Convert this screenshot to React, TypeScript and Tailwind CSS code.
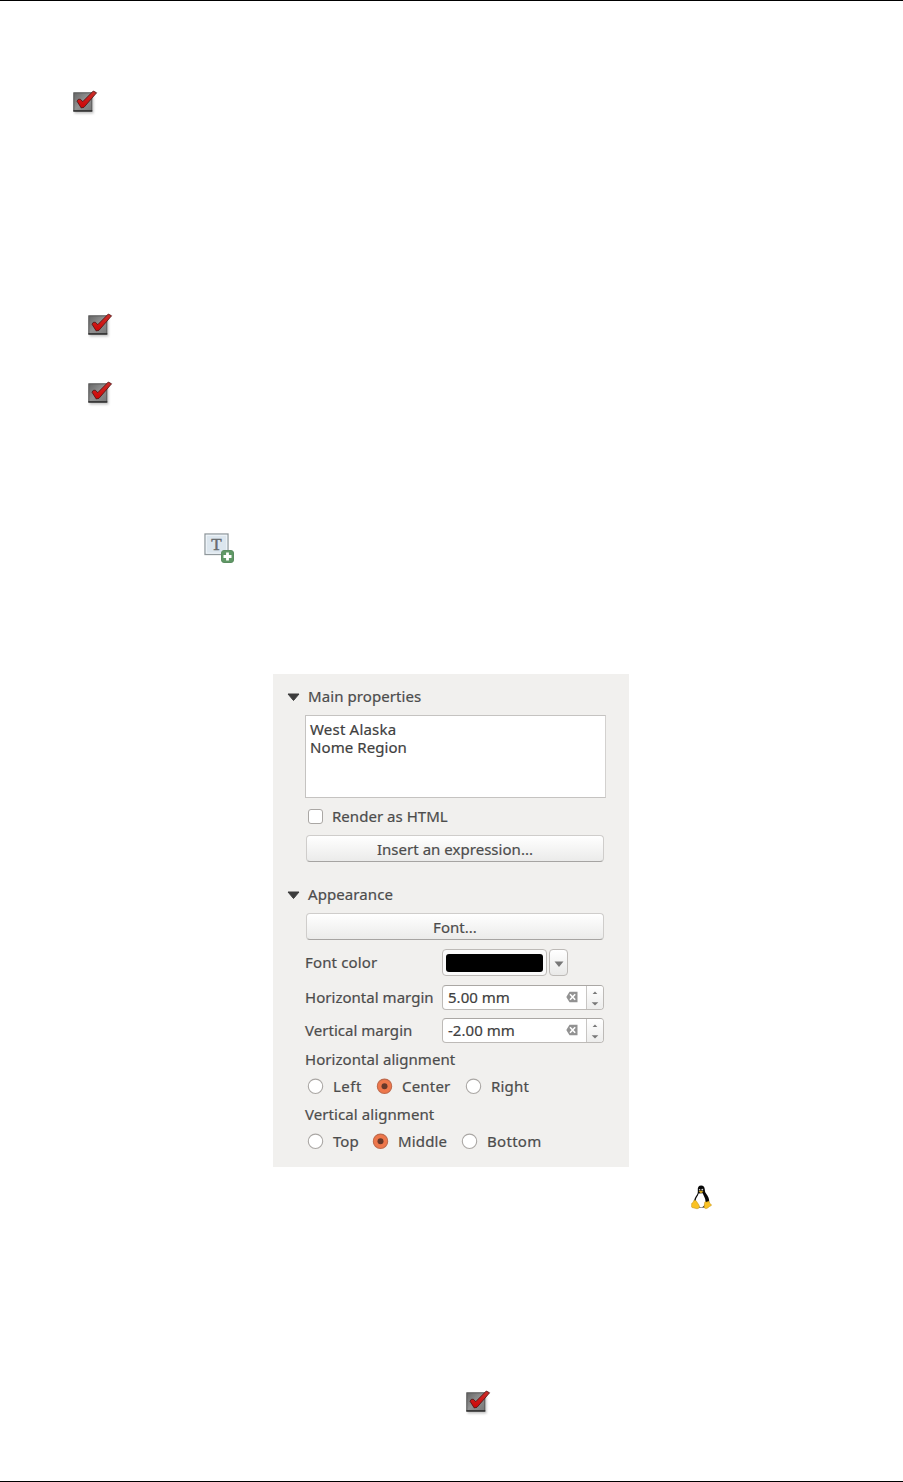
import React from "react";

const CheckIcon: React.FC = () => (
  <svg className="block shrink-0" width="26" height="26" viewBox="0 0 26 26">
    <defs>
      <linearGradient id="tile" x1="0" y1="0" x2="1" y2="1">
        <stop offset="0" stopColor="#666" />
        <stop offset="0.5" stopColor="#929292" />
        <stop offset="1" stopColor="#777" />
      </linearGradient>
      <linearGradient id="tick" x1="0" y1="0" x2="0" y2="1">
        <stop offset="0" stopColor="#c9302c" />
        <stop offset="1" stopColor="#d00505" />
      </linearGradient>
      <filter id="soft" x="-20%" y="-20%" width="150%" height="150%">
        <feGaussianBlur stdDeviation="0.8" />
      </filter>
    </defs>
    <rect x="1.5" y="4.5" width="19" height="19" fill="#aaa" opacity="0.7" filter="url(#soft)" />
    <rect x="0.8" y="2.8" width="18" height="18" fill="url(#tile)" stroke="#555" />
    <path d="M0.3 21H19.3" stroke="#222" strokeWidth="1.3" />
    <path
      d="M4 11.2 5.2 9.4 7.2 9.2 9.8 11.6 20.3 1 23.6 2.8 11 17.3 8.2 17.9Z"
      fill="url(#tick)"
      stroke="#4a1212"
      strokeWidth="0.8"
      strokeLinejoin="round"
    />
  </svg>
);

const AddLabelIcon: React.FC = () => (
  <svg className="block shrink-0" width="31" height="31" viewBox="0 0 31 31">
    <rect x="1" y="2" width="23" height="20.5" fill="#dce6ee" stroke="#90989c" strokeWidth="1.3" />
    <rect x="2.3" y="3.3" width="20.4" height="17.9" fill="none" stroke="#f0f5f9" />
    <text
      x="12.5"
      y="17.5"
      textAnchor="middle"
      fontFamily="'Liberation Serif', serif"
      fontSize="17"
      fill="#686c6e"
      stroke="#686c6e"
      strokeWidth="0.5"
    >
      T
    </text>
    <rect x="17.5" y="18.5" width="12" height="12" rx="2.5" fill="#5f9865" stroke="#5a8c60" />
    <path d="M23.5 20.5V28.5M19.5 24.5H27.5" stroke="#fff" strokeWidth="2.8" />
  </svg>
);

const TuxIcon: React.FC = () => (
  <svg className="block shrink-0" width="21" height="25" viewBox="0 0 21 25">
    <path
      d="M10.2 0.6C7.6 0.6 6.6 2.6 6.8 5.2 7 8 6.6 9 4.9 11.3 3.4 13.5 2.8 16 3.2 18.3L8 22.6H14.5L18.2 17.6C18.5 14.2 17.2 11.4 15.2 8.8 14 7.2 14 6.4 13.8 4.4 13.6 2 12.4 0.6 10.2 0.6Z"
      fill="#080808"
    />
    <path
      d="M7.6 8.4 11.7 8.2C12.4 10.7 14.6 12.7 14.5 16.2 14.4 19.8 12.8 22.2 10 22.2 7.2 22.2 4.6 18.7 4.6 15.8 4.7 12.8 7 11.2 7.6 8.4Z"
      fill="#fff"
    />
    <circle cx="8.6" cy="4.7" r="0.8" fill="#ddd" />
    <circle cx="11.3" cy="4.6" r="0.9" fill="#ddd" />
    <path d="M7.6 6.6 10 5.6 12.5 6.7 9.9 8.2Z" fill="#d9ab22" />
    <path
      d="M2.9 15.3 5 15.6 8 20.1C9.1 22.2 7.9 24 5.9 23.7L1 22.5C0 22 0.8 20.4 0.6 19.2 0.5 18 1.7 17.8 2.2 17.1Z"
      fill="#fac224"
      stroke="#bd911f"
      strokeWidth="0.5"
    />
    <path
      d="M13.7 17.2C14 16.2 15.1 17 15.9 17 16.7 17 17.4 15.7 18.2 16.7L18.7 18.3 20.5 19.8C20.8 20.9 18.5 21.1 17 22.7 15.2 24.3 13 23.7 13.1 21.6Z"
      fill="#fac224"
      stroke="#bd911f"
      strokeWidth="0.5"
    />
  </svg>
);

const Triangle: React.FC = () => (
  <svg className="mt-1 mr-2 block shrink-0" width="13" height="9" viewBox="0 0 13 9">
    <path d="M1 1H12L6.5 7.5Z" fill="#3c3c3c" stroke="#3c3c3c" strokeLinejoin="round" />
  </svg>
);

const PushButton: React.FC<{ children: React.ReactNode }> = ({ children }) => (
  <button className="ml-px flex h-[27px] w-[298px] items-center justify-center rounded-[4px] border border-[#cfcdcb] border-b-[#a6a4a2] bg-linear-to-b from-white to-[#ebebea] text-[#4c4c4c]">
    {children}
  </button>
);

const SpinBox: React.FC<{ label: React.ReactNode; children: React.ReactNode }> = ({
  label,
  children,
}) => (
  <div className="flex h-[25px] items-center">
    <span className="w-[137px] shrink-0 pb-px">{label}</span>
    <div className="flex h-[25px] w-[162px] overflow-hidden rounded-[4px] border border-[#bdbab7] border-t-[#aaa7a4] bg-white">
      <span className="flex flex-1 items-center pb-px pl-[5px] text-[#404040]">{children}</span>
      <svg className="mt-[5px] mr-[8px] block" width="12" height="12" viewBox="0 0 12 12">
        <path d="M0.3 6 3.5 0.7H11.5V11.3H3.5Z" fill="#929292" />
        <path d="M4 3.3 9.2 8.7M9.2 3.3 4 8.7" stroke="#fff" strokeWidth="1.6" />
      </svg>
      <svg
        className="block border-l border-[#c8c6c4] bg-linear-to-b from-white to-[#ededec]"
        width="17"
        height="23"
        viewBox="0 0 17 23"
      >
        <path d="M6 7.7H11L8.5 5.2Z" fill="#777" />
        <path d="M5 16.5H12L8.5 20Z" fill="#777" />
      </svg>
    </div>
  </div>
);

const Radio: React.FC<{ checked?: boolean }> = ({ checked }) => (
  <svg className="block shrink-0" width="17" height="17" viewBox="0 0 17 17">
    <circle
      cx="8.5"
      cy="8.3"
      r="7.2"
      fill={checked ? "#ee774b" : "#fff"}
      stroke={checked ? "#bf6a4c" : "#aaa7a4"}
      strokeWidth="1.1"
    />
    {checked && <circle cx="8.5" cy="8.3" r="3" fill="#67382a" />}
  </svg>
);

const LabelPanel: React.FC = () => (
  <section className="ml-[273px] h-[493px] w-[356px] bg-[#f1f0ee] pl-8 font-['Noto_Sans',sans-serif] text-[15px] leading-[18px] tracking-[0.03px] whitespace-nowrap text-[#4c4c4c] [-webkit-text-stroke:0.2px]">
    <h2 className="-ml-[18px] flex h-[41px] items-center pt-0.5">
      <Triangle />
      <span className="tracking-[0.08px]">Main properties</span>
    </h2>
    <div className="h-[83px] w-[301px] border border-[#c5c3c1] border-r-[#d3d1cf] bg-white pt-1 pl-1 text-[#404040]">
      <p className="tracking-[0.2px]">West Alaska</p>
      <p className="tracking-[0.08px]">Nome Region</p>
    </div>
    <div className="flex h-[37px] items-center pl-[3px]">
      <span className="mr-[9px] size-[15px] rounded-[3px] border border-[#aaa7a4] bg-white" />
      <span className="pb-0.5">Render as HTML</span>
    </div>
    <PushButton>
      <span>Insert an expression...</span>
    </PushButton>
    <h2 className="-ml-[18px] flex h-[51px] items-center pt-3">
      <Triangle />
      <span className="tracking-[0.08px]">Appearance</span>
    </h2>
    <PushButton>
      <span>Font...</span>
    </PushButton>
    <div className="my-[9px] flex h-[27px] items-center">
      <span className="w-[137px] pb-0.5 tracking-[0.15px]">Font color</span>
      <div className="h-[27px] w-[105px] rounded-[4px] border border-[#bdbab7] bg-[#fafafa] p-[3px] pt-1">
        <div className="h-[18px] rounded-[3px] bg-black" />
      </div>
      <div className="ml-0.5 flex h-[27px] w-[19px] items-center justify-center rounded-[4px] border border-[#bdbab7] bg-linear-to-b from-white to-[#e9e9e8]">
        <svg className="mt-[3px]" width="10" height="7" viewBox="0 0 10 7">
          <path d="M0.5 0.5H9.5L5 6Z" fill="#777" />
        </svg>
      </div>
    </div>
    <SpinBox label={<span>Horizontal margin</span>}>
      <span>5.00 mm</span>
    </SpinBox>
    <div className="h-2" />
    <SpinBox label={<span>Vertical margin</span>}>
      <span>-2.00 mm</span>
    </SpinBox>
    <div className="flex h-[34px] items-center pb-0.5">
      <span className="tracking-[0.06px]">Horizontal alignment</span>
    </div>
    <div className="flex h-5 items-center pb-px pl-0.5">
      <Radio />
      <span className="ml-[9px] w-[43px] pb-px tracking-[0.5px]">Left</span>
      <Radio checked />
      <span className="ml-[9px] w-[63px] pb-px tracking-[0.2px]">Center</span>
      <Radio />
      <span className="ml-[9px] pb-px tracking-[0.2px]">Right</span>
    </div>
    <div className="flex h-[34px] items-center">
      <span className="tracking-[0.08px]">Vertical alignment</span>
    </div>
    <div className="flex h-5 items-center pl-0.5">
      <Radio />
      <span className="ml-[9px] w-[39px]">Top</span>
      <Radio checked />
      <span className="ml-[9px] w-[63px] tracking-[0.15px]">Middle</span>
      <Radio />
      <span className="ml-[9px] tracking-[0.3px]">Bottom</span>
    </div>
  </section>
);

const App: React.FC = () => (
  <main className="flex h-[1482px] w-[903px] flex-col border-y border-black bg-white">
    <div className="mt-[89px] ml-[73px]">
      <CheckIcon />
    </div>
    <div className="mt-[197px] ml-[88px]">
      <CheckIcon />
    </div>
    <div className="mt-[42px] ml-[88px]">
      <CheckIcon />
    </div>
    <div className="mt-[125px] ml-[204px]">
      <AddLabelIcon />
    </div>
    <div className="mt-[111px]">
      <LabelPanel />
    </div>
    <div className="mt-[18px] ml-[691px]">
      <TuxIcon />
    </div>
    <div className="mt-[180px] ml-[466px]">
      <CheckIcon />
    </div>
  </main>
);

export default App;
